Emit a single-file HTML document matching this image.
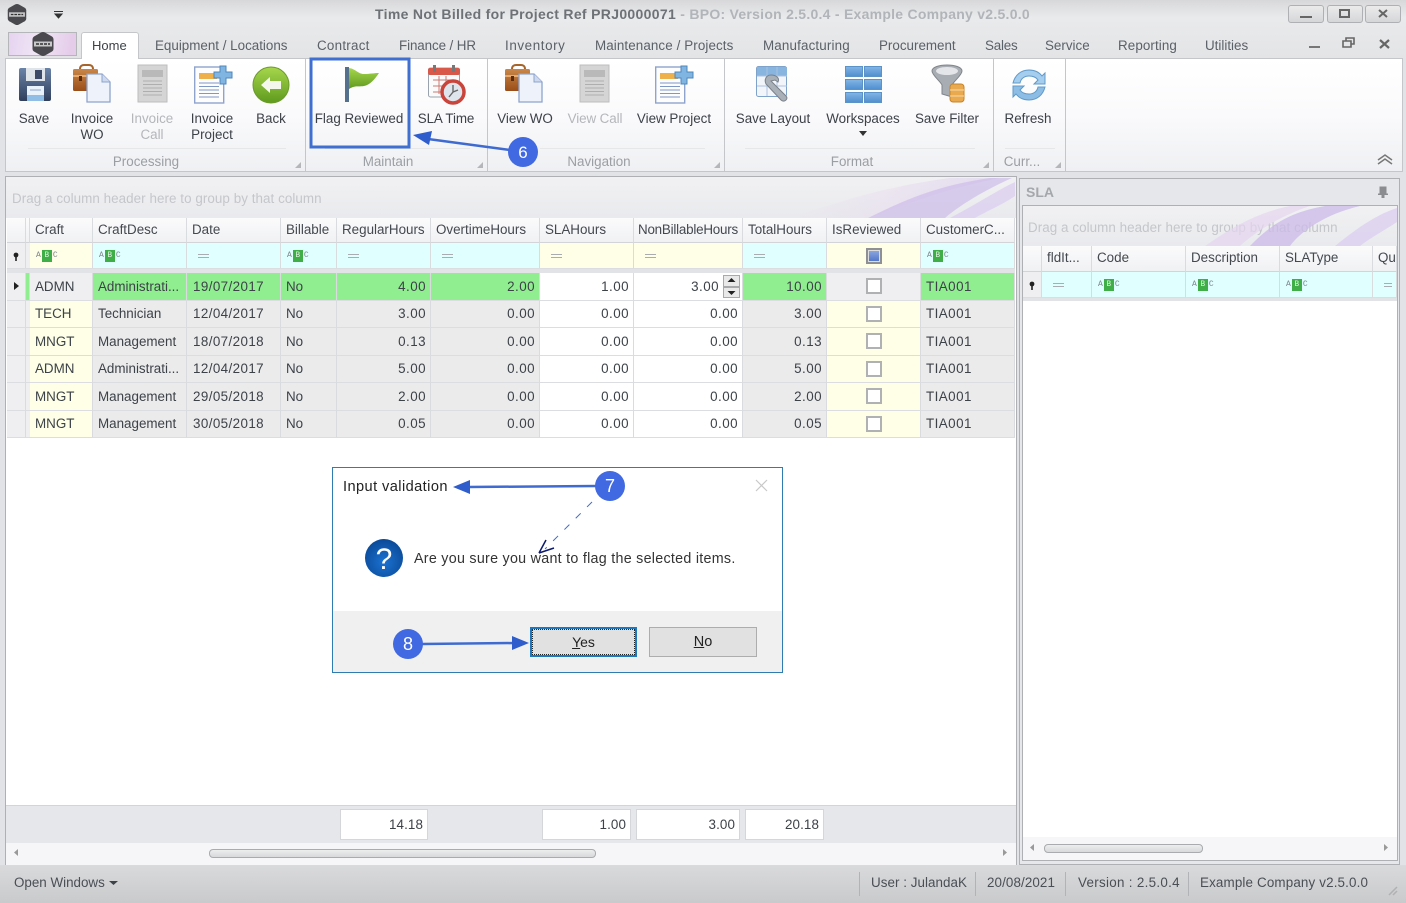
<!DOCTYPE html>
<html lang="en"><head><meta charset="utf-8"><title>Time Not Billed</title>
<style>
*{box-sizing:border-box}
html,body{margin:0;padding:0;width:1406px;height:903px;overflow:hidden;background:#e2e3e6}
body{font:13px "Liberation Sans",sans-serif;color:#3c4248;position:relative;filter:blur(.35px)}
.a{position:absolute}
.t{position:absolute;white-space:nowrap;line-height:16px}
.c{transform:translateX(-50%)}
.tab{top:38px;color:#5b6168;font-size:13.4px}
.rb{top:111px;color:#3c4248;font-size:13.4px;text-align:center}
.dis{color:#b4b6ba}
.gl{top:153.500px;color:#9b9ea3;font-size:13.4px}
.grip{position:absolute;width:0;height:0;border-left:6px solid transparent;border-bottom:6px solid #b4b6ba}
.sep{position:absolute;width:1px;background:#c4c6ca}
.grid{position:absolute;display:grid}
.grid>div{border-right:1px solid #d9dbdf;border-bottom:1px solid #dcdde1;padding:0 4px 0 5px;white-space:nowrap;overflow:hidden;font-size:13.4px;color:#3c4248;display:flex;align-items:center;position:relative}
.grid>div.h{background:linear-gradient(#fbfbfc,#f0f1f3);color:#44494f;padding-bottom:2px;border-bottom-color:#d2d4d8}
.y{background:#feffe6}.cy{background:#e0ffff}.g{background:#ebebec}.w{background:#fff}.n{background:#90ee90}.i{background:#efeff1}
.r{justify-content:flex-end;letter-spacing:.45px}
.d{letter-spacing:.45px}
.grid>div.dt{padding-left:6px;letter-spacing:.4px}
.ct{justify-content:center}
.abc{font:8px "Liberation Mono",monospace;color:#7b8288;display:inline-flex;align-items:center;margin-left:1px}
.abc b{display:inline-block;background:#3fae49;color:#d8f5d8;width:10px;height:12px;line-height:12px;text-align:center;margin:0 1px;font-weight:400}
.eq{display:block;width:11px;height:4px;border-top:1px solid #a9adb1;border-bottom:1px solid #a9adb1;margin-left:6px}
.cb{display:block;width:16px;height:16px;border:2px solid #b0b1b3;background:#fff}
.sum{position:absolute;top:809px;height:31px;background:#fff;border:1px solid #d4d6da;font-size:13.4px;text-align:right;padding:7px 4px 0 0;color:#3c4248;letter-spacing:.1px}
.sb{color:#4a4f55;font-size:13.4px;top:875px}
.thumb{position:absolute;border:1px solid #a9abaf;border-radius:4px;background:linear-gradient(#eceded,#d8d9db)}
.btn{position:absolute;top:627px;height:30px;background:#e1e1e1;text-align:center;line-height:27px;font-size:14px;color:#222}
</style></head>
<body>
<!-- title bar -->
<div class="a" style="left:0;top:0;width:1406px;height:58px;background:linear-gradient(#d7d8da,#e9eaec 30%,#e3e4e6)"></div>
<div class="t" style="left:375px;top:6px;font-weight:700;font-size:14px;color:#6e7277;letter-spacing:.32px">Time Not Billed for Project Ref PRJ0000071 <span style="color:#b1b4b8;letter-spacing:.26px">- BPO: Version 2.5.0.4 - Example Company v2.5.0.0</span></div>
<div class="a" style="left:1288px;top:5px;width:36px;height:18px;border:1px solid #aeb0b3;border-radius:3px;background:linear-gradient(#ebebec,#d5d6d8)"></div>
<div class="a" style="left:1327px;top:5px;width:36px;height:18px;border:1px solid #aeb0b3;border-radius:3px;background:linear-gradient(#ebebec,#d5d6d8)"></div>
<div class="a" style="left:1365px;top:5px;width:36px;height:18px;border:1px solid #aeb0b3;border-radius:3px;background:linear-gradient(#ebebec,#d5d6d8)"></div>
<!-- logo button + tabs -->
<div class="a" style="left:8px;top:32px;width:69px;height:24px;border:1px solid #b5b6ba;background:linear-gradient(100deg,#e6d3f0,#f0e6f5 45%,#e5cdea 90%)"></div>
<div class="a" style="left:81px;top:32px;width:58px;height:27px;background:#fff;border:1px solid #c5c6c9;border-bottom:0;border-radius:3px 3px 0 0;z-index:3"></div>
<div class="t" style="left:92px;top:38px;color:#3e4349;font-size:13px;z-index:4">Home</div>
<div class="t tab" style="left:155px">Equipment / Locations</div>
<div class="t tab" style="left:317px;letter-spacing:.25px">Contract</div>
<div class="t tab" style="left:399px;letter-spacing:-.1px">Finance / HR</div>
<div class="t tab" style="left:505px;letter-spacing:.6px">Inventory</div>
<div class="t tab" style="left:595px;letter-spacing:.1px">Maintenance / Projects</div>
<div class="t tab" style="left:763px;letter-spacing:.15px">Manufacturing</div>
<div class="t tab" style="left:879px">Procurement</div>
<div class="t tab" style="left:985px;letter-spacing:-.2px">Sales</div>
<div class="t tab" style="left:1045px">Service</div>
<div class="t tab" style="left:1118px;letter-spacing:.1px">Reporting</div>
<div class="t tab" style="left:1205px">Utilities</div>
<!-- ribbon -->
<div class="a" style="left:5px;top:58px;width:1398px;height:114px;border:1px solid #c5c6c9;background:linear-gradient(#fff,#fafafc 50%,#eff0f3)"></div>
<div class="sep" style="left:305px;top:59px;height:112px"></div>
<div class="sep" style="left:487px;top:59px;height:112px"></div>
<div class="sep" style="left:724px;top:59px;height:112px"></div>
<div class="sep" style="left:993px;top:59px;height:112px"></div>
<div class="sep" style="left:1065px;top:59px;height:112px"></div>
<div class="a" style="left:28px;top:148px;width:258px;height:1px;background:#e6e7e9"></div>
<div class="a" style="left:325px;top:148px;width:145px;height:1px;background:#e6e7e9"></div>
<div class="a" style="left:540px;top:148px;width:165px;height:1px;background:#e6e7e9"></div>
<div class="a" style="left:745px;top:148px;width:230px;height:1px;background:#e6e7e9"></div>
<div class="a" style="left:1005px;top:148px;width:50px;height:1px;background:#e6e7e9"></div>

<div class="t rb c" style="left:34px">Save</div>
<div class="t rb c" style="left:92px">Invoice<br>WO</div>
<div class="t rb c dis" style="left:152px">Invoice<br>Call</div>
<div class="t rb c" style="left:212px">Invoice<br>Project</div>
<div class="t rb c" style="left:271px">Back</div>
<div class="t rb c" style="left:359px">Flag Reviewed</div>
<div class="t rb c" style="left:446px;letter-spacing:-.1px">SLA Time</div>
<div class="t rb c" style="left:525px">View WO</div>
<div class="t rb c dis" style="left:595px;letter-spacing:-.1px">View Call</div>
<div class="t rb c" style="left:674px">View Project</div>
<div class="t rb c" style="left:773px">Save Layout</div>
<div class="t rb c" style="left:863px">Workspaces</div>
<div class="t rb c" style="left:947px">Save Filter</div>
<div class="t rb c" style="left:1028px">Refresh</div>
<div class="t gl c" style="left:146px">Processing</div>
<div class="t gl c" style="left:388px">Maintain</div>
<div class="t gl c" style="left:599px">Navigation</div>
<div class="t gl c" style="left:852px">Format</div>
<div class="t gl c" style="left:1022px">Curr...</div>
<div class="grip" style="left:295px;top:162px"></div>
<div class="grip" style="left:477px;top:162px"></div>
<div class="grip" style="left:714px;top:162px"></div>
<div class="grip" style="left:983px;top:162px"></div>
<div class="grip" style="left:1055px;top:162px"></div>

<!-- main grid panel -->
<div class="a" style="left:5px;top:176px;width:1012px;height:690px;background:#fff;border:1px solid #aeb0b3"></div>
<div class="a" style="left:6px;top:177px;width:1010px;height:41px;background:linear-gradient(#f1f1f3,#e9eaed)"></div>
<div class="t" style="left:12px;top:191px;color:#c4c6ca;font-size:13.4px;letter-spacing:.06px">Drag a column header here to group by that column</div>

<div class="grid" style="left:7px;top:218px;grid-template-columns:19px 4px 63px 94px 94px 56px 94px 109px 94px 109px 84px 94px 94px;grid-template-rows:25px 26px">
<div class="h"></div><div class="h" style="padding:0"></div><div class="h">Craft</div><div class="h">CraftDesc</div><div class="h">Date</div><div class="h">Billable</div><div class="h">RegularHours</div><div class="h">OvertimeHours</div><div class="h">SLAHours</div><div class="h" style="padding-left:4px;letter-spacing:-.22px">NonBillableHours</div><div class="h">TotalHours</div><div class="h">IsReviewed</div><div class="h">CustomerC...</div>
<div class="i"></div><div class="i"></div><div class="y"><span class="abc"><span>A</span><b>B</b><span>C</span></span></div><div class="cy"><span class="abc"><span>A</span><b>B</b><span>C</span></span></div><div class="cy"><i class="eq"></i></div><div class="cy"><span class="abc"><span>A</span><b>B</b><span>C</span></span></div><div class="cy"><i class="eq"></i></div><div class="cy"><i class="eq"></i></div><div class="y"><i class="eq"></i></div><div class="y"><i class="eq"></i></div><div class="cy"><i class="eq"></i></div><div class="y ct"><span style="display:block;width:16px;height:16px;border:2px solid #8f9094;background:linear-gradient(#8fa9e0,#4f74c8);outline:1px solid #ddd;outline-offset:-3px"></span></div><div class="cy"><span class="abc"><span>A</span><b>B</b><span>C</span></span></div>
</div>
<div class="a" style="left:7px;top:269px;width:1008px;height:4px;background:#e2e3e6"></div>

<div class="grid" style="left:7px;top:273px;grid-template-columns:19px 4px 63px 94px 94px 56px 94px 109px 94px 109px 84px 94px 94px;grid-auto-rows:27.5px">
<div class="i"></div><div class="n" style="padding:0"></div><div class="i">ADMN</div><div class="n">Administrati...</div><div class="n dt">19/07/2017</div><div class="n">No</div><div class="n r">4.00</div><div class="n r">2.00</div><div class="w r">1.00</div><div class="w r" style="padding-right:23px">3.00</div><div class="n r">10.00</div><div class="i ct"><i class="cb"></i></div><div class="n d">TIA001</div>
<div class="i"></div><div class="i"></div><div class="y">TECH</div><div class="g">Technician</div><div class="g dt">12/04/2017</div><div class="g">No</div><div class="g r">3.00</div><div class="g r">0.00</div><div class="w r">0.00</div><div class="w r">0.00</div><div class="g r">3.00</div><div class="y ct"><i class="cb"></i></div><div class="g d">TIA001</div>
<div class="i"></div><div class="i"></div><div class="y">MNGT</div><div class="g">Management</div><div class="g dt">18/07/2018</div><div class="g">No</div><div class="g r">0.13</div><div class="g r">0.00</div><div class="w r">0.00</div><div class="w r">0.00</div><div class="g r">0.13</div><div class="y ct"><i class="cb"></i></div><div class="g d">TIA001</div>
<div class="i"></div><div class="i"></div><div class="y">ADMN</div><div class="g">Administrati...</div><div class="g dt">12/04/2017</div><div class="g">No</div><div class="g r">5.00</div><div class="g r">0.00</div><div class="w r">0.00</div><div class="w r">0.00</div><div class="g r">5.00</div><div class="y ct"><i class="cb"></i></div><div class="g d">TIA001</div>
<div class="i"></div><div class="i"></div><div class="y">MNGT</div><div class="g">Management</div><div class="g dt">29/05/2018</div><div class="g">No</div><div class="g r">2.00</div><div class="g r">0.00</div><div class="w r">0.00</div><div class="w r">0.00</div><div class="g r">2.00</div><div class="y ct"><i class="cb"></i></div><div class="g d">TIA001</div>
<div class="i"></div><div class="i"></div><div class="y">MNGT</div><div class="g">Management</div><div class="g dt">30/05/2018</div><div class="g">No</div><div class="g r">0.05</div><div class="g r">0.00</div><div class="w r">0.00</div><div class="w r">0.00</div><div class="g r">0.05</div><div class="y ct"><i class="cb"></i></div><div class="g d">TIA001</div>
</div>
<!-- spinner -->
<div class="a" style="left:723px;top:275px;width:17px;height:12px;background:#e9e9ea;border:1px solid #a8a9ab"></div>
<div class="a" style="left:723px;top:287px;width:17px;height:11px;background:#e9e9ea;border:1px solid #a8a9ab"></div>

<!-- footer -->
<div class="a" style="left:6px;top:805px;width:1010px;height:38px;background:#e6e7ea;border-top:1px solid #d2d4d8"></div>
<div class="sum" style="left:340px;width:88px">14.18</div>
<div class="sum" style="left:542px;width:89px">1.00</div>
<div class="sum" style="left:636px;width:104px">3.00</div>
<div class="sum" style="left:745px;width:79px">20.18</div>
<div class="a" style="left:6px;top:843px;width:1010px;height:22px;background:#f6f6f8"></div>
<div class="thumb" style="left:209px;top:849px;width:387px;height:9px"></div>

<!-- right panel -->
<div class="a" style="left:1019px;top:178px;width:381px;height:687px;background:#e6e7ea;border:1px solid #aeb0b3"></div>
<div class="t" style="left:1026px;top:184px;font-weight:700;font-size:14px;color:#a4a7ab">SLA</div>
<div class="a" style="left:1022px;top:205px;width:376px;height:656px;background:#fff;border:1px solid #aeb0b3"></div>
<div class="a" style="left:1023px;top:206px;width:374px;height:40px;background:linear-gradient(#f1f1f3,#e9eaed)"></div>
<div class="t" style="left:1028px;top:220px;color:#c4c6ca;font-size:13.4px;z-index:2;letter-spacing:.06px">Drag a column header here to group by that column</div>
<div class="grid" style="left:1023px;top:246px;width:374px;overflow:hidden;grid-template-columns:19px 50px 94px 94px 93px 24px;grid-template-rows:26px 26px">
<div class="h"></div><div class="h">fldIt...</div><div class="h">Code</div><div class="h">Description</div><div class="h">SLAType</div><div class="h">Qu</div>
<div class="i"></div><div class="cy"><i class="eq"></i></div><div class="cy"><span class="abc"><span>A</span><b>B</b><span>C</span></span></div><div class="cy"><span class="abc"><span>A</span><b>B</b><span>C</span></span></div><div class="cy"><span class="abc"><span>A</span><b>B</b><span>C</span></span></div><div class="cy"><i class="eq"></i></div>
</div>
<div class="a" style="left:1023px;top:298px;width:374px;height:3px;background:#e2e3e6"></div>
<div class="a" style="left:1023px;top:837px;width:374px;height:23px;background:#f6f6f8"></div>
<div class="thumb" style="left:1044px;top:844px;width:159px;height:9px"></div>

<!-- status bar -->
<div class="a" style="left:0;top:865px;width:1406px;height:38px;background:linear-gradient(#d9dadc,#c9cacc)"></div>
<div class="t sb" style="left:14px">Open Windows</div>
<div class="sep" style="left:859px;top:872px;height:24px;background:#b2b3b6"></div>
<div class="sep" style="left:975px;top:872px;height:24px;background:#b2b3b6"></div>
<div class="sep" style="left:1065px;top:872px;height:24px;background:#b2b3b6"></div>
<div class="sep" style="left:1188px;top:872px;height:24px;background:#b2b3b6"></div>
<div class="t sb" style="left:871px;letter-spacing:.05px">User : JulandaK</div>
<div class="t sb" style="left:987px;letter-spacing:.1px">20/08/2021</div>
<div class="t sb" style="left:1078px;letter-spacing:.3px">Version : 2.5.0.4</div>
<div class="t sb" style="left:1200px;letter-spacing:.15px">Example Company v2.5.0.0</div>

<!-- dialog -->
<div class="a" style="left:332px;top:467px;width:451px;height:206px;background:#fff;border:1px solid #2f7cb3"></div>
<div class="a" style="left:333px;top:611px;width:449px;height:61px;background:#f0f0f0"></div>
<div class="t" style="left:343px;top:479px;font-size:14.6px;color:#222;letter-spacing:.42px">Input validation</div>
<div class="t" style="left:414px;top:551px;font-size:14.3px;color:#333;letter-spacing:.27px">Are you sure you want to flag the selected items.</div>
<div class="btn" style="left:530px;width:107px;border:2px solid #1e78c0;outline:1px dotted #222;outline-offset:-3px"><u>Y</u>es</div>
<div class="btn" style="left:649px;width:108px;border:1px solid #adadad;line-height:28px;font-size:14.5px"><u>N</u>o</div>

<!-- icon & annotation layer -->
<svg class="a" style="left:0;top:0;z-index:6" width="1406" height="903" viewBox="0 0 1406 903" fill="none">
<defs>
<linearGradient id="gb" x1="0" y1="0" x2="0" y2="1"><stop offset="0" stop-color="#c98647"/><stop offset="1" stop-color="#9a4d18"/></linearGradient>
<linearGradient id="gr" x1="0" y1="0" x2="0" y2="1"><stop offset="0" stop-color="#a6d64c"/><stop offset="1" stop-color="#5f9a1e"/></linearGradient>
<linearGradient id="gs" x1="0" y1="0" x2="0" y2="1"><stop offset="0" stop-color="#6a83a8"/><stop offset="1" stop-color="#303e5c"/></linearGradient>
<linearGradient id="gw" x1="0" y1="0" x2="1" y2="0"><stop offset="0" stop-color="#e2d4ee" stop-opacity="0"/><stop offset=".5" stop-color="#e6d3ef"/><stop offset="1" stop-color="#c9b6e6"/></linearGradient>
<linearGradient id="gt" x1="0" y1="0" x2="0" y2="1"><stop offset="0" stop-color="#82b6e4"/><stop offset="1" stop-color="#4f8fcf"/></linearGradient>
<radialGradient id="gq" cx=".5" cy=".6" r=".6"><stop offset="0" stop-color="#1b72d2"/><stop offset="1" stop-color="#0a4a98"/></radialGradient>
<g id="hex"><path d="M-2-11.500Q0-12.500 2-11.500L9-7.500Q10.500-6.500 10.500-5V5Q10.500 6.500 9 7.500L2 11.500Q0 12.500-2 11.500L-9 7.500Q-10.500 6.500-10.500 5V-5Q-10.500-6.500-9-7.500Z" fill="#4a4a4e"/><path d="M-9-2.500H9V2.500H-9Z" fill="#c9c9cb"/><path d="M-7 0h14" stroke="#333" stroke-width="1.400" stroke-dasharray="3 1"/></g>
<g id="brief"><path d="M7 4c0-3 2-4 4-4h5c2 0 4 1 4 4" stroke="#a6642a" stroke-width="2"/><rect x="0" y="4" width="25" height="22" rx="1.500" fill="url(#gb)"/><path d="M0 11h25" stroke="#e9ac6e" stroke-width="2"/><rect x="6" y="11" width="3" height="5" fill="#5a2c0c"/><path d="M14 9h15l8 8v20H14Z" fill="#eef2fb" stroke="#8ea4cc" stroke-width="1.300"/><path d="M29 9v8h8" fill="#cfd9ee" stroke="#8ea4cc"/></g>
<g id="gdoc"><rect x="0" y="0" width="29" height="37" fill="#d5d5d6" stroke="#bdbdbe"/><rect x="4" y="5" width="21" height="7" fill="#b9b9ba"/><path d="M5 16h19M5 19.500h19M5 23h19M5 26.500h19M5 30h19" stroke="#aeaeaf"/></g>
<g id="dplus"><rect x=".7" y="2" width="29" height="36" fill="#fdfdfe" stroke="#8ea4cc" stroke-width="1.400"/><rect x="5" y="8" width="18" height="6" fill="#eeb04a"/><path d="M5 18h20M5 21.500h20M5 25h20M5 28.500h20M5 32h20" stroke="#7e97c4"/><path d="M26 1h6v6h6v6h-6v6h-6v-6h-6V7h6Z" fill="#7fb5e0" stroke="#4e87bd"/></g>
</defs>

<!-- waves main -->
<path d="M790 218C850 198 890 186 950 178H1000C940 190 905 205 870 218Z" fill="url(#gw)" opacity=".35"/>
<path d="M868 218C905 200 935 186 990 178H1012C985 190 960 205 945 218Z" fill="#cdbce9" opacity=".7"/>
<path d="M950 218C975 205 998 190 1015 182V196C1000 206 985 212 975 218Z" fill="#dccff0" opacity=".8"/>
<!-- waves right -->
<path d="M1205 246C1235 225 1260 212 1290 206H1310C1280 216 1255 232 1240 246Z" fill="#e6d6ef" opacity=".7"/>
<path d="M1250 246C1270 225 1290 212 1325 206H1360C1325 214 1300 232 1290 246Z" fill="#cbbae8" opacity=".75"/>
<path d="M1335 246C1355 230 1375 215 1397 208V222C1385 230 1370 238 1360 246Z" fill="#dccff0" opacity=".8"/>

<use href="#hex" transform="translate(17 14.500) scale(.88)"/>
<use href="#hex" x="43" y="44"/>
<path d="M54 11.500h9M55 14h7l-3.500 4Z" stroke="#333" fill="#333"/>

<!-- window buttons glyphs -->
<path d="M1300 17h12" stroke="#666" stroke-width="2"/>
<rect x="1340" y="10" width="9" height="7" stroke="#666" stroke-width="2"/>
<path d="M1379 10l8 7M1387 10l-8 7" stroke="#666" stroke-width="2"/>
<path d="M1309 47h11" stroke="#777" stroke-width="2"/>
<path d="M1343 47v-6h8v6Zm3-6v-3h8v6h-3" stroke="#666" stroke-width="1.600"/>
<path d="M1380 40l9 8M1389 40l-9 8" stroke="#666" stroke-width="2.200"/>
<path d="M1378 160l7-5 7 5M1378 164l7-5 7 5" stroke="#777" stroke-width="1.500"/>

<!-- save -->
<rect x="19" y="68" width="32" height="33" rx="2" fill="url(#gs)"/><rect x="26" y="68" width="19" height="13" fill="#dfe3ea"/><rect x="35" y="70" width="7" height="9" fill="#3c4a68"/><rect x="27" y="86" width="17" height="15" fill="#e9f1fa"/><rect x="27" y="95" width="17" height="6" fill="#8fbde6"/><path d="M30 90h11" stroke="#8ea4cc"/>
<use href="#brief" x="73" y="65"/>
<use href="#gdoc" x="138" y="65"/>
<use href="#dplus" x="194" y="65"/>
<circle cx="271" cy="85" r="18" fill="url(#gr)" stroke="#6b9a2a"/><path d="M261 85l9-8v4h11v8h-11v4Z" fill="#f4f8ec"/>
<!-- flag -->
<rect x="345" y="67" width="4" height="35" fill="#54708c"/><path d="M349 68c7 1 9 6 15 6 6 0 10-1 15-1-4 6-9 12-15 13-6 1-9-1-15 3Z" fill="url(#gr)"/>
<!-- SLA -->
<rect x="428.500" y="68" width="31" height="29" rx="2" fill="#fbfbfc" stroke="#9aa3ad"/><rect x="428" y="68" width="32" height="7" rx="2" fill="#d8594a"/><rect x="433" y="65" width="3" height="7" fill="#777"/><rect x="452" y="65" width="3" height="7" fill="#777"/><path d="M433 80h20M433 86h14M433 92h12M439 76v18M446 76v10" stroke="#c97a72"/><circle cx="453" cy="92" r="11" fill="#dfe5ec" stroke="#c9443a" stroke-width="3.500"/><path d="M453 85v7l-4 5M453 92l5-2" stroke="#666" stroke-width="1.400"/>
<use href="#brief" x="505" y="65"/>
<use href="#gdoc" x="580" y="65"/>
<use href="#dplus" x="655" y="65"/>
<!-- save layout -->
<rect x="756.500" y="66.500" width="30" height="30" rx="2" fill="#f2f6fb" stroke="#7ea2c9"/><rect x="757" y="67" width="30" height="9" fill="#88b4e0"/><path d="M767 67v29M777 67v29M757 76h30M757 86h30" stroke="#a9c3e0"/><path d="M771 75c-5 0-7 5-5 9l15 16c3 3 8-1 5-4L771 81l4-1 3 2c2-4-2-7-7-7Z" fill="#aab0b7" stroke="#7b8189"/>
<!-- workspaces -->
<g fill="url(#gt)" stroke="#5b93c8"><rect x="845.500" y="66.500" width="17" height="10"/><rect x="864.500" y="66.500" width="17" height="10"/><rect x="845.500" y="79.500" width="17" height="10"/><rect x="864.500" y="79.500" width="17" height="10"/><rect x="845.500" y="92.500" width="17" height="10"/><rect x="864.500" y="92.500" width="17" height="10"/></g>
<path d="M859 131h8l-4 5Z" fill="#333"/>
<!-- funnel -->
<path d="M932 71c0-8 30-8 30 0 0 4-8 10-10 14v12l-10-3V85c-2-4-10-10-10-14Z" fill="#a8adb3" stroke="#80858b"/><ellipse cx="947" cy="71" rx="11" ry="4" fill="#e3e5e8"/><rect x="950" y="84" width="14" height="18" rx="3" fill="#e9a94f" stroke="#c78428"/><path d="M950 90h14M950 96h14" stroke="#f8dca9"/>
<!-- refresh -->
<path d="M1013 83c2-8 8-13 16-13 5 0 10 2 13 6l3-3v11h-11l4-4c-2-3-5-4-9-4-4 0-8 2-9 7Z" fill="#a4cdee" stroke="#5f9ac9"/><path d="M1045 87c-2 8-8 13-16 13-5 0-10-2-13-6l-3 3V86h11l-4 4c2 3 5 4 9 4 4 0 8-2 9-7Z" fill="#8dbde4" stroke="#5f9ac9"/>

<!-- filter key glyph -->
<circle cx="16" cy="255" r="2.400" fill="#222"/><path d="M16 255v6" stroke="#222" stroke-width="1.600"/>
<circle cx="1032" cy="284" r="2.400" fill="#222"/><path d="M1032 284v6" stroke="#222" stroke-width="1.600"/>
<path d="M14 282l5 4-5 4Z" fill="#222"/>
<path d="M731.500 278l4 4h-8Z" fill="#222"/><path d="M731.500 295l4-4h-8Z" fill="#222"/>
<!-- pin -->
<path d="M1380 187h7v7h1.500v1.500h-3.500v3h-3v-3h-3.500V194h1.500Z" fill="#8a8c90" transform="translate(-.5 -.5)"/>
<!-- scroll arrows -->
<path d="M18 849v7l-4-3.500Z M1003 849v7l4-3.500Z M1034 844v7l-4-3.500Z M1384 844v7l4-3.500Z" fill="#999"/>
<path d="M109 881h9l-4.500 4Z" fill="#3c4248"/>
<path d="M1389 895l8-8M1393 895l4-4" stroke="#b0b1b4" stroke-width="1.500"/>
<!-- dialog close + question -->
<path d="M756 480l11 11M767 480l-11 11" stroke="#c8c8c8" stroke-width="1.200"/>
<circle cx="384" cy="558" r="19" fill="url(#gq)"/>
<text x="384" y="569" fill="#fff" font-family="Liberation Sans" font-size="30" text-anchor="middle">?</text>

<!-- annotations -->
<path d="M510 150 428 139" stroke="#3f6bd0" stroke-width="2.500"/><path d="M413 135 432 131 429 145Z" fill="#2f5dcc"/>
<circle cx="523" cy="152" r="15" fill="#4169e1"/><text x="523" y="158" fill="#fff" font-family="Liberation Sans" font-size="17" text-anchor="middle">6</text>
<path d="M596 486 468 487" stroke="#3f6bd0" stroke-width="2.500"/><path d="M453 487 470 480V494Z" fill="#2f5dcc"/>
<circle cx="610" cy="486" r="15" fill="#4169e1"/><text x="610" y="492" fill="#fff" font-family="Liberation Sans" font-size="18" text-anchor="middle">7</text>
<path d="M592 502 545 549" stroke="#3f6bd0" stroke-width="1" stroke-dasharray="7 9"/><path d="M539 553 546 540M539 553 554 548" stroke="#0b1a6b" stroke-width="1.500"/>
<path d="M422 644 515 643" stroke="#3f6bd0" stroke-width="2.500"/><path d="M529 643 512 636V650Z" fill="#2f5dcc"/>
<circle cx="408" cy="644" r="15" fill="#4169e1"/><text x="408" y="650" fill="#fff" font-family="Liberation Sans" font-size="18" text-anchor="middle">8</text>
<rect x="311" y="59" width="98" height="88" stroke="#3f6fd0" stroke-width="3"/>
</svg>
</body></html>
